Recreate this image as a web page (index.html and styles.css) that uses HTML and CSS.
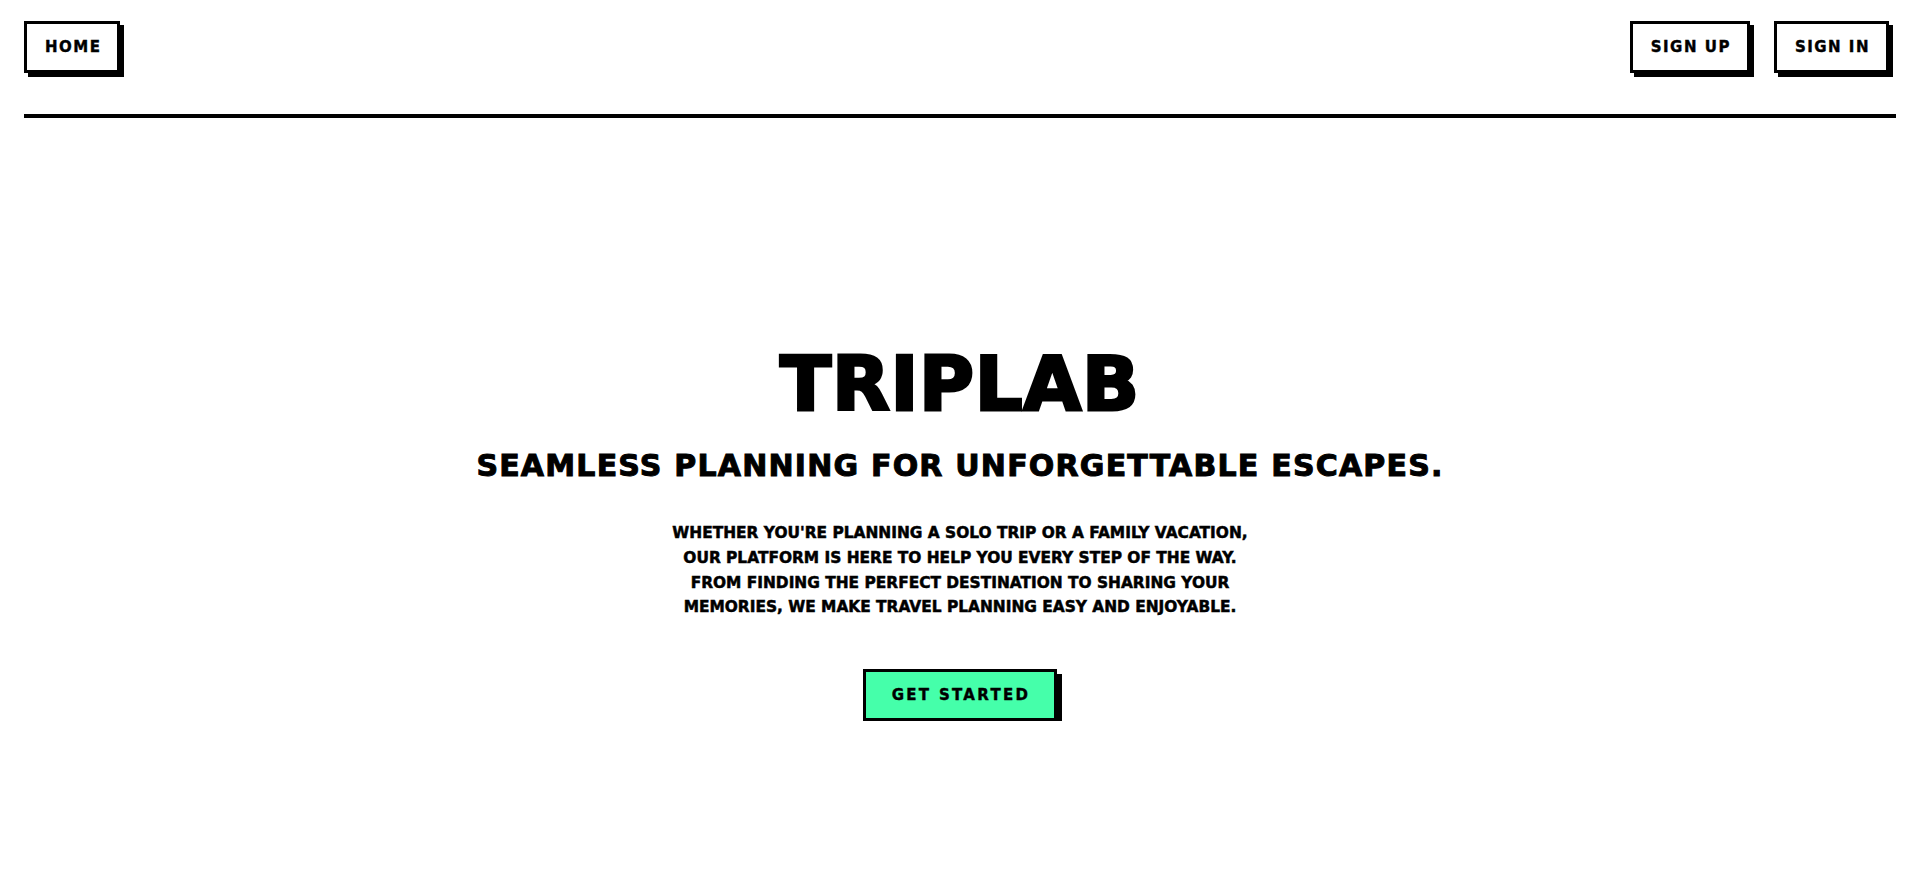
FILE: index.html
```html
<!DOCTYPE html>
<html lang="en">
<head>
<meta charset="utf-8">
<title>TripLab</title>
<link rel="stylesheet" href="styles.css">
</head>
<body>
<div class="page">
  <header class="topbar">
    <a class="btn" href="#">HOME</a>
    <nav class="auth">
      <a class="btn" href="#">SIGN UP</a>
      <a class="btn" href="#">SIGN IN</a>
    </nav>
  </header>
  <main class="hero">
    <h1 class="title">TRIPLAB</h1>
    <h2 class="tagline">SEAMLESS PLANNING FOR UNFORGETTABLE ESCAPES.</h2>
    <p class="intro">WHETHER YOU'RE PLANNING A SOLO TRIP OR A FAMILY VACATION,<br>OUR PLATFORM IS HERE TO HELP YOU EVERY STEP OF THE WAY.<br>FROM FINDING THE PERFECT DESTINATION TO SHARING YOUR<br>MEMORIES, WE MAKE TRAVEL PLANNING EASY AND ENJOYABLE.</p>
    <a class="btn btn-cta" href="#">GET STARTED</a>
  </main>
</div>
</body>
</html>
```
FILE: styles.css
```css
* { box-sizing: border-box; }
html, body { margin: 0; padding: 0; background: #fff; }
body {
  font-family: "DejaVu Sans", "Liberation Sans", sans-serif;
  font-weight: 700;
  color: #000;
}
.page {
  padding: 0 21px 0 24px;
}
.topbar {
  display: flex;
  justify-content: space-between;
  align-items: flex-start;
  padding: 21px 0 41px;
  border-bottom: 4px solid #000;
}
.auth {
  display: flex;
  gap: 24px;
  padding-right: 7px;
}
.btn {
  display: inline-block;
  border: 3px solid #000;
  box-shadow: 4px 4px 0 #000;
  background: #fff;
  color: #000;
  text-decoration: none;
  font-size: 15px;
  line-height: 20px;
  letter-spacing: 0.1em;
  -webkit-text-stroke: 0.4px #000;
  padding: 13px 16px 13px 18px;
}
.hero {
  display: flex;
  flex-direction: column;
  align-items: center;
  text-align: center;
  padding-top: 228px;
}
.title {
  margin: 0;
  font-size: 75px;
  line-height: 76px;
  letter-spacing: 0.01em;
  -webkit-text-stroke: 3px #000;
}
.tagline {
  margin: 27px 0 0;
  font-size: 30px;
  line-height: 34px;
  letter-spacing: 1.2px;
  -webkit-text-stroke: 1px #000;
}
.intro {
  margin: 38px 0 0;
  font-size: 15.4px;
  line-height: 24.8px;
  -webkit-text-stroke: 0.5px #000;
}
.btn-cta {
  margin-top: 49px;
  background: #45ffaa;
  letter-spacing: 2.3px;
  box-shadow: 5px 5px 0 #000;
  padding: 13px 24px 13px 26px;
}
```
